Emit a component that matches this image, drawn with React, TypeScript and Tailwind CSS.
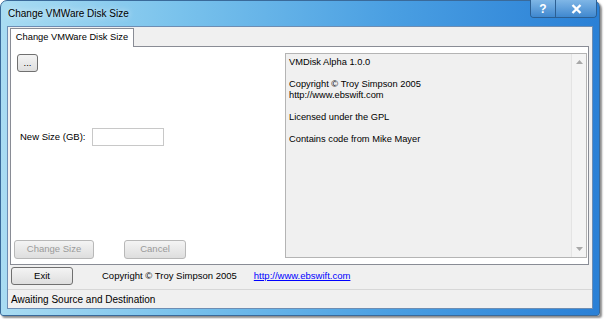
const font = "font-['Liberation_Sans',Arial,sans-serif]";

const WinButton = ({
  children,
  disabled,
  className,
}: {
  children: React.ReactNode;
  disabled?: boolean;
  className?: string;
}) => (
  <div
    className={`flex items-center justify-center h-[18px] rounded-[3px] border text-[9.5px] bg-gradient-to-b from-[#f4f4f4] to-[#dedede] ${
      disabled ? "border-[#b8b8b8] text-[#9a9a9a]" : "border-[#707070] text-black"
    } ${className ?? ""}`}
  >
    {children}
  </div>
);

const AboutBox = () => (
  <div className="flex w-[302px] h-[205px] border border-[#b4b4b4] bg-[#f0f0f0]">
    <div className="flex-1 pl-[3px] pt-[3px] text-[9.3px] leading-[11px] text-black">
      <p className="h-[11px]">VMDisk Alpha 1.0.0</p>
      <p className="h-[11px]" />
      <p className="h-[11px]">Copyright © Troy Simpson 2005</p>
      <p className="h-[11px]">http://www.ebswift.com</p>
      <p className="h-[11px]" />
      <p className="h-[11px]">Licensed under the GPL</p>
      <p className="h-[11px]" />
      <p className="h-[11px]">Contains code from Mike Mayer</p>
    </div>
    <div className="flex w-[15px] flex-col items-center justify-between border-l border-[#e4e4e4] bg-[#f4f4f4] py-[6px]">
      <svg width="7" height="4" viewBox="0 0 7 4">
        <path d="M0 4 L3.5 0 L7 4 Z" fill="#a8a8a8" />
      </svg>
      <svg width="7" height="4" viewBox="0 0 7 4">
        <path d="M0 0 L3.5 4 L7 0 Z" fill="#a8a8a8" />
      </svg>
    </div>
  </div>
);

const App = () => {
  return (
    <div className={`w-[604px] h-[319px] bg-white ${font}`}>
      <div className="flex flex-col w-[600px] h-[316px] rounded-t-[7px] rounded-b-[3px] border border-[#3a6a9a] bg-[linear-gradient(90deg,#a9dcf2_0%,#79c2ec_30%,#4a9fe2_65%,#2a80d6_100%)] shadow-[2px_2px_2px_rgba(0,0,0,0.45)]">
        {/* title bar */}
        <div className="relative flex h-[25px] shrink-0 items-center pl-[7px]">
          <span className="text-[10px] text-black [text-shadow:0_0_6px_rgba(255,255,255,0.9)]">
            Change VMWare Disk Size
          </span>
          <div className="absolute right-[2px] top-[-1px] flex h-[18px] overflow-hidden rounded-b-[4px] border border-[#2c5f93] border-t-0">
            <div className="flex w-[25px] items-center justify-center border-r border-[#2c5f93] bg-gradient-to-b from-[#7fb6e6] to-[#3f88cf] text-[12px] font-bold text-white">
              ?
            </div>
            <div className="flex w-[40px] items-center justify-center bg-gradient-to-b from-[#7fb6e6] to-[#3f88cf]">
              <svg width="11" height="10" viewBox="0 0 11 10">
                <path d="M1.5 1 L9.5 9 M9.5 1 L1.5 9" stroke="white" strokeWidth="2.4" />
              </svg>
            </div>
          </div>
        </div>

        {/* client */}
        <div className="mx-[6px] mb-[6px] flex flex-1 flex-col border border-[#6d8db3] bg-[#f0f0f0]">
          {/* tab strip */}
          <div className="flex pl-[2px] pt-[1px]">
            <div className="relative z-10 -mb-px flex h-[19px] w-[124px] items-center justify-center whitespace-nowrap border border-b-0 border-[#898c95] bg-white text-[9.3px]">
              Change VMWare Disk Size
            </div>
          </div>
          {/* tab panel */}
          <div className="ml-[2px] mr-[3px] flex h-[219px] border border-[#898c95] bg-white">
            <div className="flex w-[274px] flex-col pl-[6px] pt-[7px]">
              <WinButton className="w-[21px] h-[17px] text-[8px] leading-none">...</WinButton>
              <div className="mt-[56px] flex items-center pl-[3px]">
                <span className="text-[9.5px]">New Size (GB):</span>
                <div className="ml-[7px] h-[18px] w-[72px] border border-[#c8c8c8] bg-white" />
              </div>
              <div className="mt-[94px] flex -ml-[3px] gap-[30px]">
                <WinButton disabled className="w-[80px] h-[19px]">
                  Change Size
                </WinButton>
                <WinButton disabled className="w-[62px] h-[19px]">
                  Cancel
                </WinButton>
              </div>
            </div>
            <div className="pt-[6px]">
              <AboutBox />
            </div>
          </div>
          {/* exit row */}
          <div className="mt-[2px] flex items-center pl-[3px] text-[9.5px]">
            <WinButton className="w-[62px]">Exit</WinButton>
            <span className="ml-[29px]">Copyright © Troy Simpson 2005</span>
            <span className="ml-[17px] text-[#0000ff] underline">http://www.ebswift.com</span>
          </div>
          {/* status bar */}
          <div className="mt-[4px] flex flex-1 items-center border-t border-[#d7d7d7] pl-[3px] text-[10px]">
            Awaiting Source and Destination
          </div>
        </div>
      </div>
    </div>
  );
};

export default App;
